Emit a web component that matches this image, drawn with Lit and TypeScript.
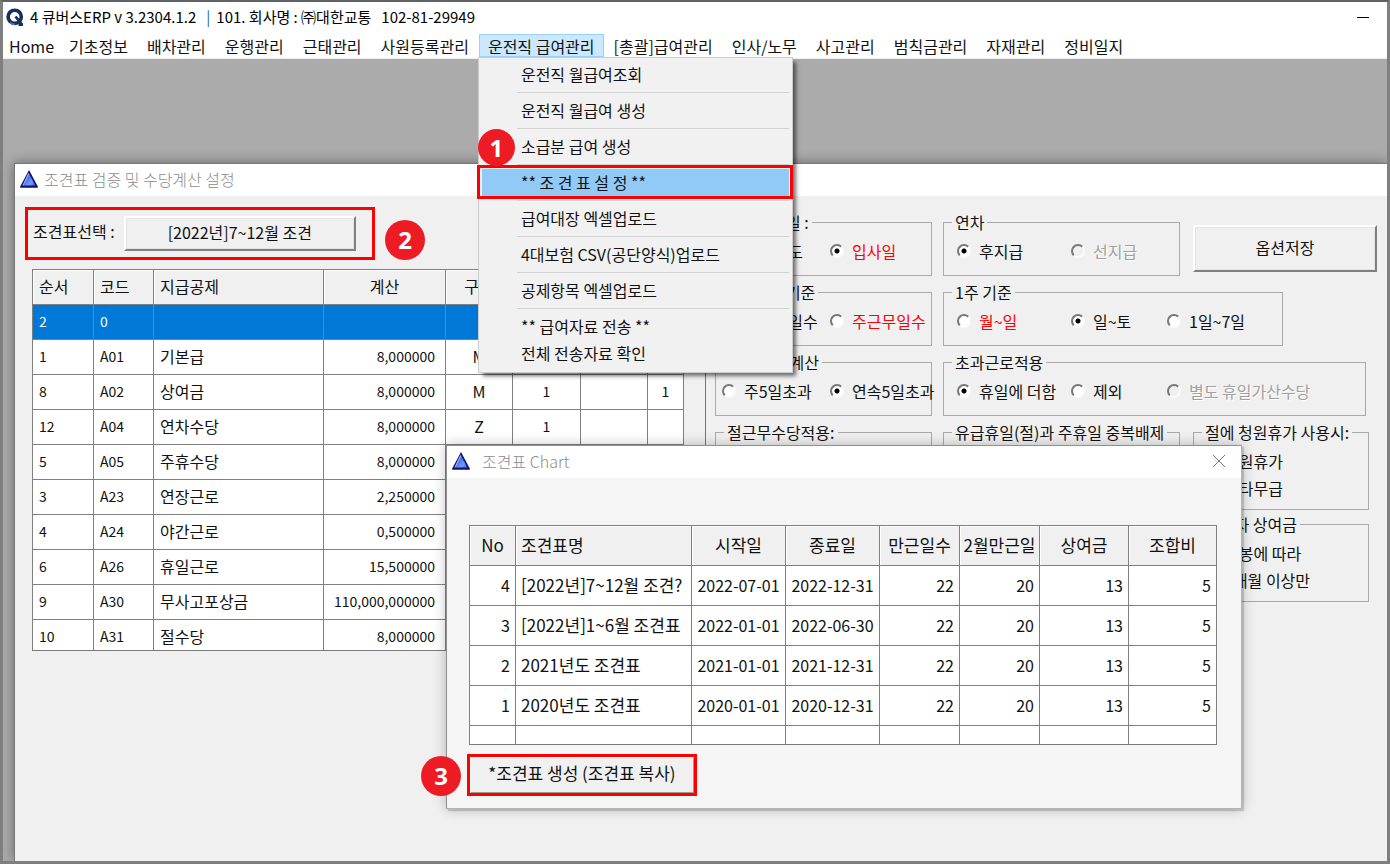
import { LitElement, html, css, svg, nothing } from "lit";
import { customElement, property } from "lit/decorators.js";

type Align = "left" | "center" | "right";
interface Column { title: string; width: number; align: Align; head?: Align; small?: boolean; large?: boolean }
interface Choice { text: string; checked?: boolean; disabled?: boolean; red?: boolean }

const menus = [
  "Home", "기초정보", "배차관리", "운행관리", "근태관리", "사원등록관리", "운전직 급여관리",
  "[총괄]급여관리", "인사/노무", "사고관리", "범칙금관리", "자재관리", "정비일지",
];
const openMenu = "운전직 급여관리";

const commands: { text: string; line?: boolean; active?: boolean }[] = [
  { text: "운전직 월급여조회", line: true },
  { text: "운전직 월급여 생성", line: true },
  { text: "소급분 급여 생성", line: true },
  { text: "** 조 견 표 설 정 **", line: true, active: true },
  { text: "급여대장 엑셀업로드", line: true },
  { text: "4대보험 CSV(공단양식)업로드", line: true },
  { text: "공제항목 엑셀업로드", line: true },
  { text: "** 급여자료 전송 **" },
  { text: "전체 전송자료 확인" },
];

const payColumns: Column[] = [
  { title: "순서", width: 61, align: "left", small: true },
  { title: "코드", width: 60, align: "left", small: true },
  { title: "지급공제", width: 170, align: "left" },
  { title: "계산", width: 122, align: "right", head: "center", small: true },
  { title: "구분", width: 67, align: "center" },
  { title: "", width: 68, align: "center", small: true },
  { title: "", width: 67, align: "center", small: true },
  { title: "", width: 36, align: "center", small: true },
];
const payRows = [
  ["2", "0", "", "", "", "", "", ""],
  ["1", "A01", "기본급", "8,000000", "M", "", "", ""],
  ["8", "A02", "상여금", "8,000000", "M", "1", "", "1"],
  ["12", "A04", "연차수당", "8,000000", "Z", "1", "", ""],
  ["5", "A05", "주휴수당", "8,000000", "", "", "", ""],
  ["3", "A23", "연장근로", "2,250000", "", "", "", ""],
  ["4", "A24", "야간근로", "0,500000", "", "", "", ""],
  ["6", "A26", "휴일근로", "15,500000", "", "", "", ""],
  ["9", "A30", "무사고포상금", "110,000,000000", "", "", "", ""],
  ["10", "A31", "절수당", "8,000000", "", "", "", ""],
];

const chartColumns: Column[] = [
  { title: "No", width: 46, align: "right", head: "center" },
  { title: "조견표명", width: 176, align: "left", large: true },
  { title: "시작일", width: 94, align: "center" },
  { title: "종료일", width: 94, align: "center" },
  { title: "만근일수", width: 80, align: "right", head: "center" },
  { title: "2월만근일", width: 80, align: "right", head: "center" },
  { title: "상여금", width: 89, align: "right", head: "center" },
  { title: "조합비", width: 88, align: "right", head: "center" },
];
const chartRows = [
  ["4", "[2022년]7~12월 조견?", "2022-07-01", "2022-12-31", "22", "20", "13", "5"],
  ["3", "[2022년]1~6월 조견표", "2022-01-01", "2022-06-30", "22", "20", "13", "5"],
  ["2", "2021년도 조견표", "2021-01-01", "2021-12-31", "22", "20", "13", "5"],
  ["1", "2020년도 조견표", "2020-01-01", "2020-12-31", "22", "20", "13", "5"],
  ["", "", "", "", "", "", "", ""],
];

const fonts = css`
  :host {
    font-family: "Noto Sans CJK KR", "Noto Sans", sans-serif;
    font-size: 16px;
    line-height: 20px;
    color: #111;
  }
  * { box-sizing: border-box; }
`;

const prism = svg`
  <svg viewBox="0 0 18 18" width="18" height="18" aria-hidden="true">
    <defs>
      <linearGradient id="face" x1="0" y1="0" x2="1" y2="1">
        <stop offset="0" stop-color="#2a3fd0" />
        <stop offset="0.7" stop-color="#6f9dff" />
        <stop offset="1" stop-color="#3d5ce8" />
      </linearGradient>
    </defs>
    <path d="M9 0 L17.8 16.5 V17.8 H0.2 V16.5 Z" fill="#0c1470" />
    <path d="M9 3.5 L15.2 15.6 H3.6 Z" fill="url(#face)" />
    <path d="M8.6 2.6 L2.4 15.4 L3.6 15.4 L9 4.6 Z" fill="#a9bcff" />
  </svg>`;

@customElement("data-grid")
export class DataGrid extends LitElement {
  static styles = [fonts, css`
    :host { display: block; overflow: hidden; border-bottom: 1px solid #7a7a7a; }
    .grid { border-collapse: collapse; table-layout: fixed; background: #fff; }
    .cell { border: 1px solid #808080; padding: 0 6px 3px; height: 35px; font-weight: 400; white-space: nowrap; overflow: hidden; }
    .grid.tall .cell { height: 40px; padding: 0 5px 2px; }
    .grid.tall .head { padding: 0 0 2px; font-size: 17px; }
    .grid.tall .head.left { padding: 0 5px 2px; }
    .cell.head { background: #f0f0f0; box-shadow: inset 1px 1px #fff; }
    .left { text-align: left; }
    .center { text-align: center; }
    .right { text-align: right; }
    .grid .cell.wide { padding-right: 10px; }
    .small { font-size: 14px; }
    .large { font-size: 17px; }
    .picked { background: #0078d7; color: #fff; }
  `];
  @property({ attribute: false }) columns: Column[] = [];
  @property({ attribute: false }) rows: string[][] = [];
  @property({ type: Number }) picked = -1;
  @property({ type: Boolean }) tall = false;

  render() {
    const total = this.columns.reduce((sum, c) => sum + c.width, 1);
    return html`
      <table class="grid ${this.tall ? "tall" : ""}" style="width:${total}px">
        <colgroup>${this.columns.map((c) => html`<col style="width:${c.width}px">`)}</colgroup>
        <thead><tr>${this.columns.map((c) => html`<th class="cell head ${c.head ?? c.align}" scope="col">${c.title}</th>`)}</tr></thead>
        <tbody>${this.rows.map((row, r) => html`
          <tr class=${r === this.picked ? "picked" : ""}>${row.map((v, i) => {
            const c = this.columns[i];
            return html`<td class="cell ${c.align} ${c.small ? "small" : ""} ${c.large ? "large" : ""} ${c.small && c.align === "right" ? "wide" : ""}">${v}</td>`;
          })}</tr>`)}
        </tbody>
      </table>`;
  }
}

@customElement("option-group")
export class OptionGroup extends LitElement {
  static styles = [fonts, css`
    :host { display: block; }
    .group { margin: 0; min-width: 0; height: 100%; padding: 7px 0 0 8px; border: 1px solid #a9a9a9; }
    .legend { padding: 0 3px; line-height: 20px; white-space: nowrap; }
    .choices { display: grid; line-height: 24px; row-gap: 3px; }
    .pair { grid-template-columns: 108px 1fr; margin-left: -2px; }
    .triple { grid-template-columns: 114px 96px 1fr; margin-left: 5px; }
    .choice { display: flex; align-items: center; gap: 8px; white-space: nowrap; min-width: 0; }
    .dot {
      appearance: none; flex: none; margin: 0; width: 14px; height: 14px; border-radius: 50%;
      border: 2px solid; border-color: #777 #fafafa #fafafa #777; background: #fff;
    }
    .dot:checked { background: radial-gradient(circle, #000 0 2px, #fff 3px); }
    .dot:disabled { background: #f0f0f0; }
    .off { color: #a0a0a0; text-shadow: 1px 1px #fff; }
    .red { color: #f00; }
  `];
  @property() caption = "";
  @property() layout = "";
  @property({ attribute: false }) choices: Choice[] = [];

  render() {
    return html`
      <fieldset class="group">
        <legend class="legend">${this.caption}</legend>
        <div class="choices ${this.layout}">
          ${this.choices.map((c) => html`
            <label class="choice ${c.disabled ? "off" : ""} ${c.red ? "red" : ""}">
              <input class="dot" type="radio" name="choice" ?checked=${!!c.checked} ?disabled=${!!c.disabled}>
              <span>${c.text}</span>
            </label>`)}
        </div>
      </fieldset>`;
  }
}

@customElement("app-root")
export class AppRoot extends LitElement {
  static styles = [fonts, css`
    :host {
      display: flex; flex-direction: column; min-height: 100vh; overflow: hidden;
      background: #fff; border: 3px solid #7f7f7f; border-top: 2px solid #5f6265; box-sizing: border-box;
    }
    button { font: inherit; color: inherit; }
    .titlebar { display: flex; align-items: center; height: 32px; padding: 0 16px 2px 3px; font-size: 15px; color: #000; }
    .logo { display: block; margin-right: 6px; }
    .titlebar h1 { display: flex; gap: 10px; margin: 0; flex: 1; font-size: 15px; font-weight: 400; white-space: nowrap; }
    .firm { display: flex; gap: 6px; }
    .bar { color: #1f6aa8; }
    .minimize { width: 14px; height: 20px; padding: 0; border: 0; background: none; display: flex; align-items: center; }
    .minimize::before { content: ""; width: 12px; height: 1px; background: #000; }

    .menubar { display: flex; gap: 1px; height: 25px; padding: 0; margin: 0; list-style: none; border-bottom: 1px solid #f0f0f0; }
    .menu { position: relative; }
    .menu-button { height: 23px; padding: 0 8px; border: 1px solid transparent; background: none; line-height: 20px; white-space: nowrap; }
    .menu:first-child .menu-button { padding: 0 4px 0 5px; }
    .menu-button.open { background: #cce8ff; border-color: #99d1ff; }
    .dropdown {
      position: absolute; z-index: 5; left: -1px; top: 23px; width: 315px; margin: 0; padding: 3px 3px 5px; list-style: none;
      background: #f1f1f1; border: 1px solid #ccc; box-shadow: 4px 4px 4px -1px rgba(0, 0, 0, .55);
    }
    .command { position: relative; display: block; width: 100%; height: 27px; padding: 0 0 0 39px; border: 0; background: none; text-align: left; line-height: 25px; white-space: nowrap; }
    .command.active { background: #91c9f7; }
    .command.active::after { content: ""; position: absolute; inset: -4px -4px -3px -5px; border: 3px solid #f00; }
    .line { height: 9px; padding: 4px 0; margin-left: 35px; }
    .line::before { content: ""; display: block; height: 1px; background: #d2d2d2; }

    .badge { width: 40px; height: 40px; border-radius: 50%; background: #ed1c24; color: #fff; display: grid; place-items: center; font: 700 24px/1 "Noto Sans", sans-serif; }
    .badge.one { position: absolute; left: -1px; top: 71px; width: 37px; height: 37px; }
    .badge.three { position: absolute; left: -26px; bottom: 12px; }

    .desktop { flex: 1; display: flex; background: #ababab; padding: 104px 0 0 11px; }
    .window { position: relative; flex: 1; min-width: 0; background: #f0f0f0; border: 1px solid #777; border-width: 1px 0 0 1px; box-shadow: 0 0 12px rgba(0, 0, 0, .4); }
    .caption { display: flex; align-items: center; height: 32px; padding: 0 15px 2px 5px; background: #fff; color: #8c8c8c; gap: 6px; }
    .caption svg { display: block; }
    .caption h2 { margin: 0; flex: 1; font-size: 16px; font-weight: 300; }
    .content { display: flex; align-items: flex-start; padding: 11px 10px 51px; }
    .left { flex: none; width: 680px; }
    .picker { display: flex; align-items: flex-end; gap: 10px; }
    .mark { border: 3px solid #f00; }
    .picker .mark { display: flex; align-items: center; width: 350px; height: 53px; padding: 0 16px 0 5px; gap: 9px; }
    .picker label { padding-bottom: 5px; }
    .raised { background: #f0f0f0; border: 2px solid; border-color: #fff #808080 #808080 #fff; outline: 1px solid #e3e3e3; outline-offset: -3px; padding: 0 0 4px; }
    .picker .raised { flex: 1; height: 35px; }
    .pay { margin: 9px 0 0 7px; width: 652px; height: 382px; }

    .options { flex: 1; min-width: 0; display: flex; flex-direction: column; gap: 6px; padding: 5px 0 0 9px; border-left: 1px solid #777; }
    .row { display: flex; align-items: flex-start; gap: 11px; }
    .row option-group { height: 64px; flex: none; }
    .row .narrow { width: 217px; }
    .row .mid { width: 237px; }
    .row .wide { width: 340px; }
    .row .widest { width: 423px; }
    .save { width: 184px; height: 47px; margin: 13px 0 0 2px; }
    .row .high, .stack option-group { height: 88px; }
    .stack { display: flex; flex-direction: column; gap: 4px; width: 176px; margin-left: 2px; }

    .dialog { position: absolute; z-index: 2; left: 431px; top: 281px; background: #f5f5f5; border: 1px solid #909090; border-color: #909090 #b4b4b4 #b4b4b4 #909090; box-shadow: 2px 2px 1px rgba(0, 0, 0, .15), 0 0 12px rgba(0, 0, 0, .25); }
    .dialog .caption { gap: 12px; }
    .close { display: block; width: 14px; height: 14px; padding: 0; border: 0; background: none; }
    .sheet { padding: 47px 24px 12px 22px; }
    .chart { width: 748px; height: 220px; }
    .copy { display: inline-flex; margin: 9px 0 0 -2px; }
    .copy .raised { width: 224px; height: 36px; font-size: 17px; border-width: 1px; border-color: #fff #999 #999 #fff; outline: 0; }
  `];

  render() {
    return html`
      <header class="titlebar">
        <svg class="logo" viewBox="0 0 18 18" width="18" height="18" aria-hidden="true">
          <circle cx="8.7" cy="8.8" r="6.6" fill="none" stroke="#14305c" stroke-width="3.6" />
          <path d="M9.5 8.5 L15.5 16 M12.5 16.6 H17" stroke="#14305c" stroke-width="2.8" fill="none" />
          <path d="M4 14.5 A7 7 0 0 0 9 16.4" stroke="#4b78b5" stroke-width="1.6" fill="none" />
        </svg>
        <h1>
          <span>4 큐버스ERP v 3.2304.1.2</span>
          <span class="firm"><span class="bar">|</span><span>101. 회사명 : ㈜대한교통</span></span>
          <span>102-81-29949</span>
        </h1>
        <button class="minimize" aria-label="최소화"></button>
      </header>
      <ul class="menubar">
        ${menus.map((name) => html`
          <li class="menu">
            <button class="menu-button ${name === openMenu ? "open" : ""}">${name}</button>
            ${name === openMenu ? this.dropdown() : nothing}
          </li>`)}
      </ul>
      <main class="desktop">
        <section class="window">
          <div class="caption">${prism}<h2>조견표 검증 및 수당계산 설정</h2></div>
          <div class="content">
            <div class="left">
              <div class="picker">
                <div class="mark">
                  <label for="sheet">조견표선택 :</label>
                  <button class="raised" id="sheet">[2022년]7~12월 조견</button>
                </div>
                <span class="badge">2</span>
              </div>
              <data-grid class="pay" .columns=${payColumns} .rows=${payRows} .picked=${0}></data-grid>
            </div>
            ${this.options()}
          </div>
          ${this.chart()}
        </section>
      </main>`;
  }

  private dropdown() {
    return html`
      <div class="dropdown">
        ${commands.map((c) => html`
          <button class="command ${c.active ? "active" : ""}">${c.text}</button>
          ${c.line ? html`<div class="line"></div>` : nothing}`)}
        <span class="badge one">1</span>
      </div>`;
  }

  private options() {
    return html`
      <div class="options">
        <div class="row">
          <option-group class="narrow" layout="pair" caption="연차기준일 :"
            .choices=${[{ text: "회계년도" }, { text: "입사일", checked: true, red: true }]}></option-group>
          <option-group class="mid" layout="triple" caption="연차"
            .choices=${[{ text: "후지급", checked: true }, { text: "선지급", disabled: true }]}></option-group>
          <button class="raised save">옵션저장</button>
        </div>
        <div class="row">
          <option-group class="narrow" layout="pair" caption="만근일수기준"
            .choices=${[{ text: "월근무일수" }, { text: "주근무일수", red: true }]}></option-group>
          <option-group class="wide" layout="triple" caption="1주 기준"
            .choices=${[{ text: "월~일", red: true }, { text: "일~토", checked: true }, { text: "1일~7일" }]}></option-group>
        </div>
        <div class="row">
          <option-group class="narrow" layout="pair" caption="연장근로 계산"
            .choices=${[{ text: "주5일초과" }, { text: "연속5일초과", checked: true }]}></option-group>
          <option-group class="widest" layout="triple" caption="초과근로적용"
            .choices=${[{ text: "휴일에 더함", checked: true }, { text: "제외" }, { text: "별도 휴일가산수당", disabled: true }]}></option-group>
        </div>
        <div class="row">
          <option-group class="narrow high" caption="절근무수당적용:"></option-group>
          <option-group class="mid high" caption="유급휴일(절)과 주휴일 중복배제"></option-group>
          <div class="stack">
            <option-group caption="절에 청원휴가 사용시:"
              .choices=${[{ text: "청원휴가" }, { text: "기타무급" }]}></option-group>
            <option-group caption="퇴사자 상여금"
              .choices=${[{ text: "연봉에 따라" }, { text: "6개월 이상만" }]}></option-group>
          </div>
        </div>
      </div>`;
  }

  private chart() {
    return html`
      <section class="dialog">
        <div class="caption">
          ${prism}<h2>조견표 Chart</h2>
          <button class="close" aria-label="닫기">
            <svg viewBox="0 0 14 14" width="14" height="14" aria-hidden="true"><path d="M1 1 L13 13 M13 1 L1 13" stroke="#777" stroke-width="1" /></svg>
          </button>
        </div>
        <div class="sheet">
          <data-grid class="chart" tall .columns=${chartColumns} .rows=${chartRows}></data-grid>
          <div class="copy mark"><button class="raised">*조견표 생성 (조견표 복사)</button></div>
        </div>
        <span class="badge three">3</span>
      </section>`;
  }
}
